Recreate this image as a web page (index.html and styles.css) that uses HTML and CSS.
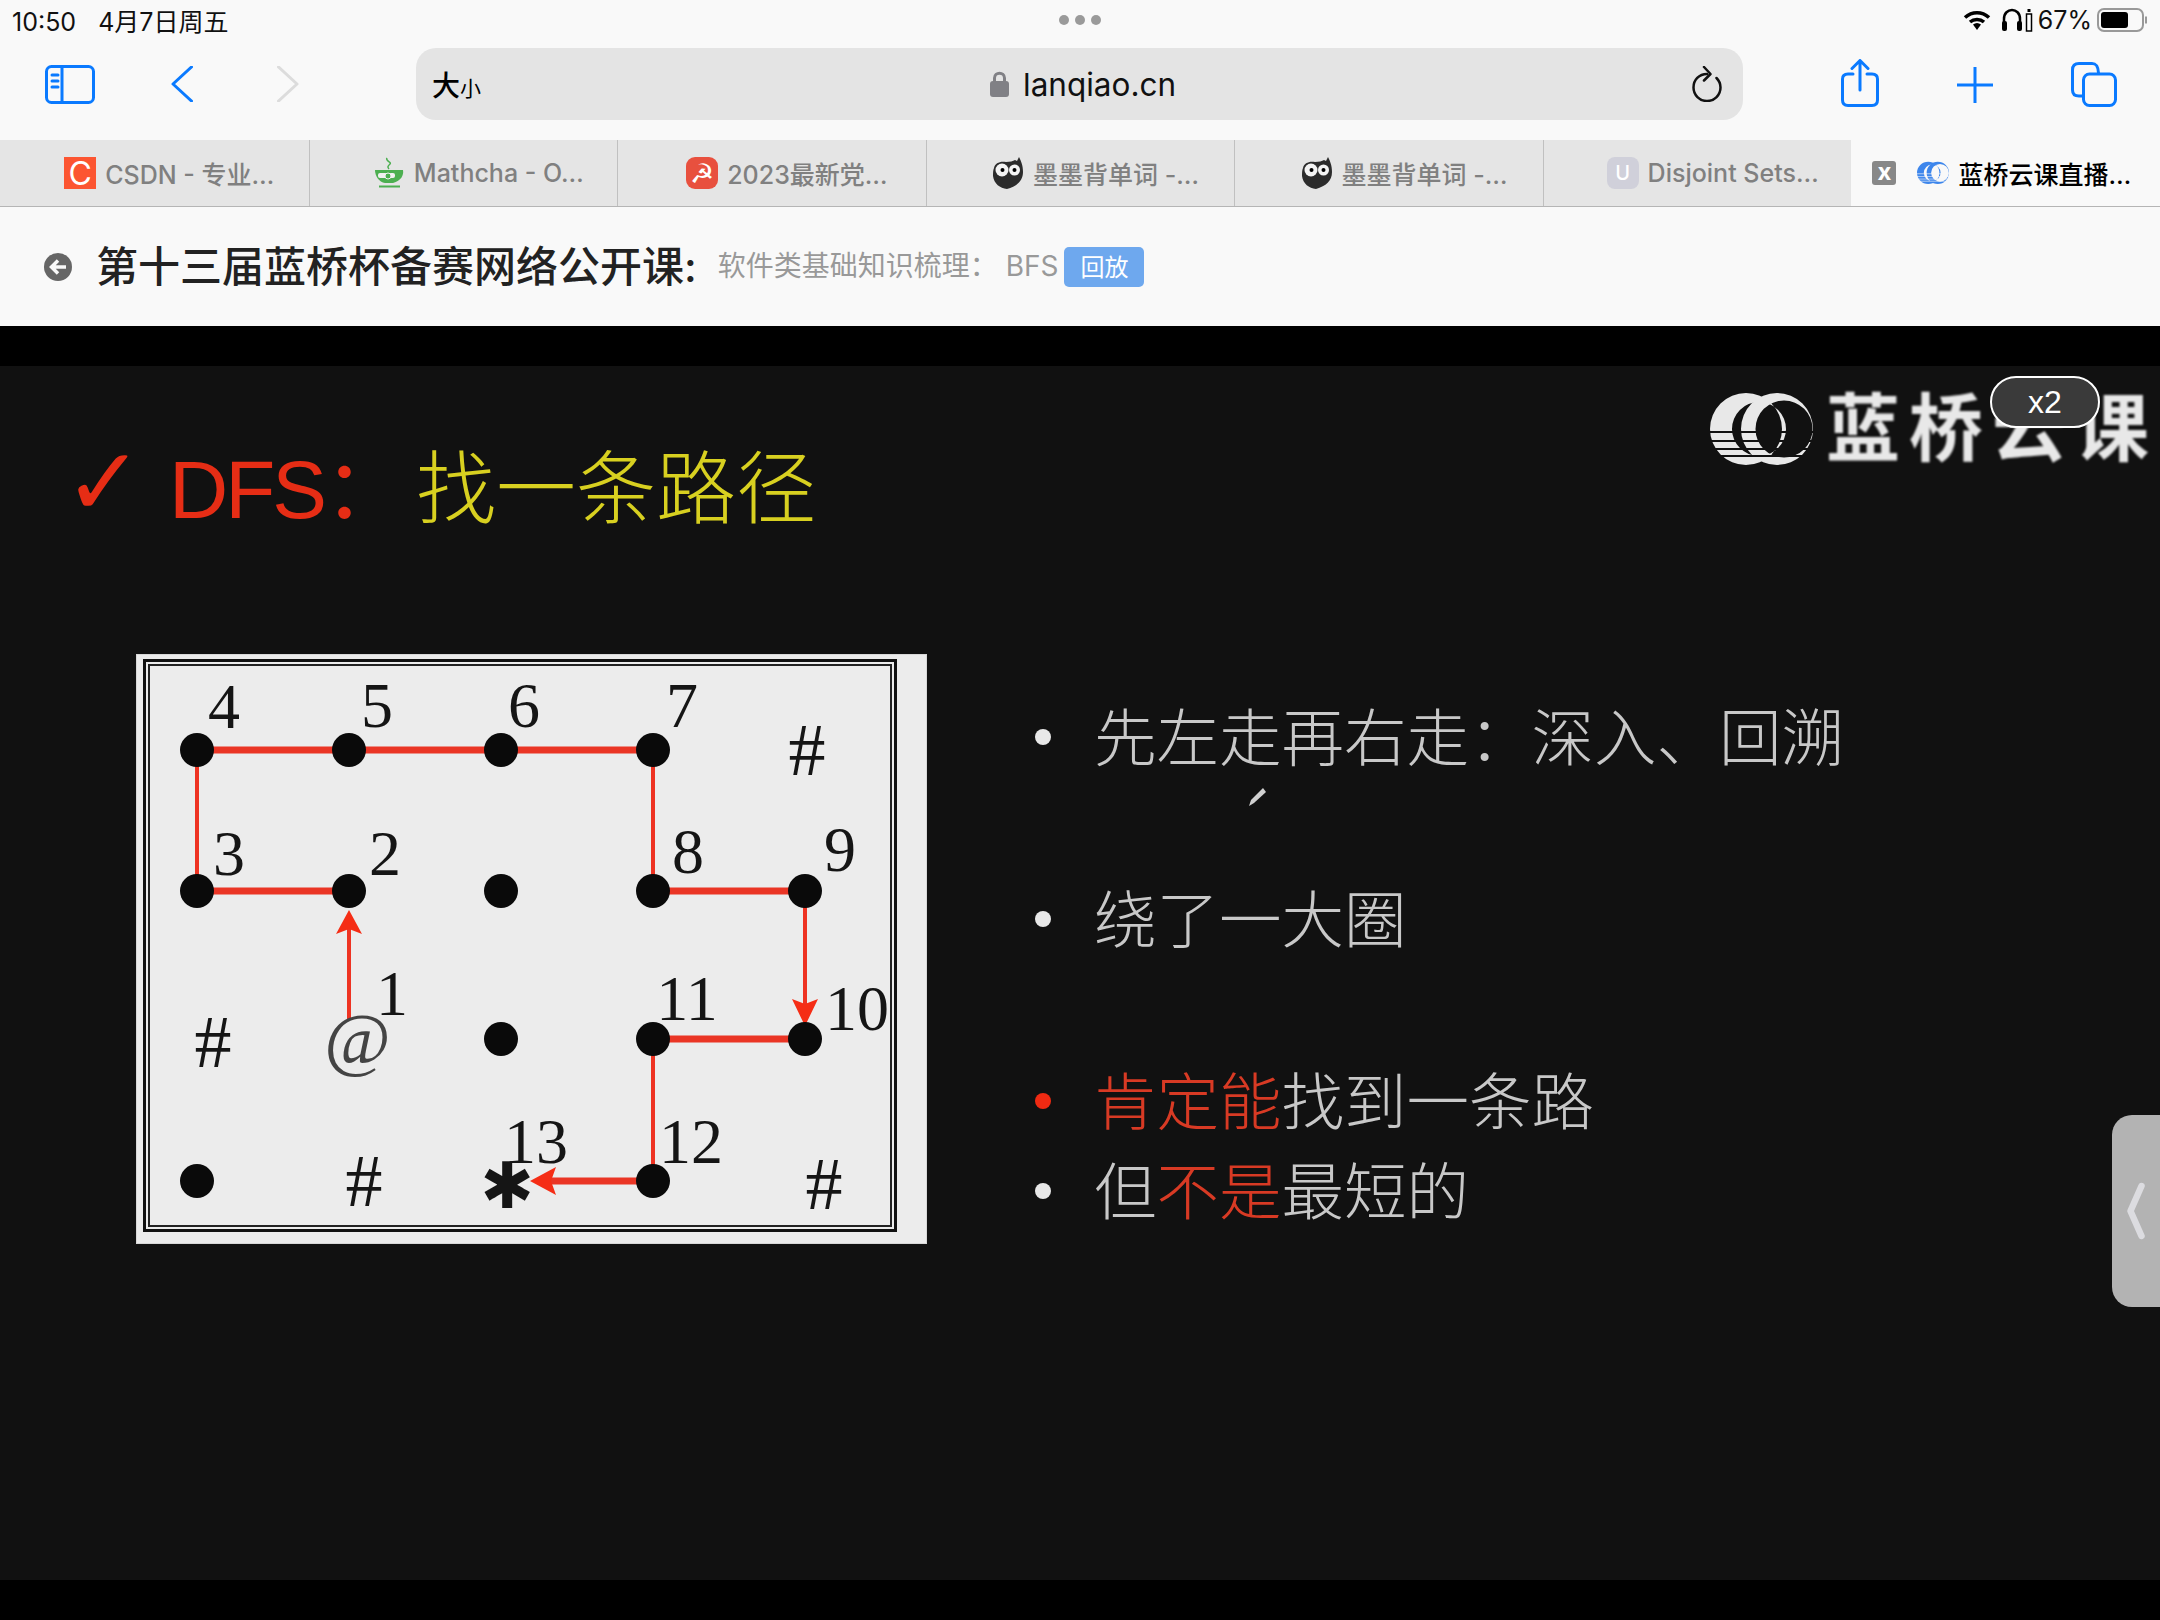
FILE: index.html
```html
<!doctype html>
<html lang = "zh-CN">
    <head>
        <meta charset = "utf-8" />
        <meta name = "viewport" content = "width=device-width, initial-scale=1.0">

        <!-- CSS -->
        <link rel="stylesheet" href="styles.css">

        <title>蓝桥云课直播</title>
    </head>
    <body>
        <!-- Tablet status bar -->
        <header class = "status">
            <div class = "status-left">
                <span>10:50</span>
                <span>4月7日周五</span>
            </div>
            <div class = "status-dots"><i></i><i></i><i></i></div>
            <div class = "status-right">
                <svg class = "wifi" viewBox = "0 0 28 22">
                    <path class = "wifi-arc" d = "M2 8.500C9 2 19 2 26 8.500" />
                    <path class = "wifi-arc" d = "M7 13C11 9.500 17 9.500 21 13" />
                    <path d = "M10 15.500C12.500 13.500 15.500 13.500 18 15.500L14 21Z" />
                </svg>
                <svg class = "phones" viewBox = "0 0 32 24">
                    <path class = "phones-arc" d = "M3 17V11C3 -1 19 -1 19 11V17" />
                    <rect x = "1" y = "13" width = "5" height = "10" rx = "2" />
                    <rect x = "16" y = "13" width = "5" height = "10" rx = "2" />
                    <rect x = "25.500" y = "6" width = "5" height = "17" class = "phones-level" />
                    <rect x = "26.500" y = "1" width = "3" height = "3" />
                </svg>
                <span>67%</span>
                <svg class = "battery" viewBox = "0 0 51 24">
                    <rect class = "battery-shell" x = "1" y = "1" width = "45" height = "22" rx = "6" />
                    <rect x = "4" y = "4" width = "27" height = "16" rx = "3" />
                    <path class = "battery-nub" d = "M49 8.500V15.500" />
                </svg>
            </div>
        </header>

        <!-- Browser toolbar -->
        <nav class = "toolbar">
            <svg class = "tool sidebar-icon" viewBox = "0 0 50 39">
                <rect x = "1.500" y = "1.500" width = "47" height = "36" rx = "5" />
                <path d = "M17 2V37M7 10H13M7 16H13M7 22H13" />
            </svg>
            <svg class = "tool back-icon" viewBox = "0 0 22 36">
                <path d = "M20.500 1L2 18L20.500 35" />
            </svg>
            <svg class = "tool forward-icon" viewBox = "0 0 22 36">
                <path d = "M1.500 1L20 18L1.500 35" />
            </svg>
            <div class = "address">
                <span class = "text-size"><b>大</b><small>小</small></span>
                <span class = "host">
                    <svg class = "lock" viewBox = "0 0 19 26">
                        <path class = "lock-loop" d = "M4.500 12V7C4.500 0.500 14.500 0.500 14.500 7V12" />
                        <rect y = "10" width = "19" height = "16" rx = "3" />
                    </svg>
                    lanqiao.cn
                </span>
                <svg class = "reload" viewBox = "0 0 30 36">
                    <path d = "M15 8C7 8 1.500 14 1.500 21.500C1.500 29 7.500 35 15 35C22.500 35 28.500 29 28.500 21.500C28.500 18 27 14.500 24.500 12" />
                    <path d = "M12 1L18.500 8L12 14.500" />
                </svg>
            </div>
            <svg class = "tool share-icon" viewBox = "0 0 38 48">
                <path d = "M12 15H7C3.500 15 1.500 17 1.500 20V41C1.500 44.500 3.500 46.500 7 46.500H31C34.500 46.500 36.500 44.500 36.500 41V20C36.500 17 34.500 15 31 15H26" />
                <path d = "M19 31V2M11 9.500L19 1.500L27 9.500" />
            </svg>
            <svg class = "tool plus-icon" viewBox = "0 0 36 36">
                <path d = "M18 0V36M0 18H36" />
            </svg>
            <svg class = "tool tabs-icon" viewBox = "0 0 46 45">
                <path d = "M11 34H8C3.500 34 1.500 32 1.500 28V8C1.500 3.500 3.500 1.500 8 1.500H21C25 1.500 27 3.500 27.500 11" />
                <rect x = "12.500" y = "12" width = "32" height = "31.500" rx = "6" />
            </svg>
        </nav>

        <!-- Open tabs -->
        <div class = "tabs">
            <div class = "tab">
                <span class = "favicon favicon-csdn">C</span>
                <span>CSDN - 专业…</span>
            </div>
            <div class = "tab">
                <svg class = "favicon" viewBox = "0 0 32 32">
                    <path class = "cup-steam" d = "M14 1C12 4 19 5 17 7C15 9 14 10 16 12" />
                    <path class = "cup-body" d = "M2 13H30C31 18 28 24 20 26H12C6 25 2 19 2 13Z" />
                    <rect class = "cup-band" x = "5" y = "16" width = "17" height = "5" rx = "2" />
                    <circle class = "cup-mark" cx = "15" cy = "19" r = "3" />
                    <path class = "cup-saucer" d = "M6 29.500H27" />
                </svg>
                <span>Mathcha - O…</span>
            </div>
            <div class = "tab">
                <span class = "favicon favicon-party">☭</span>
                <span>2023最新党…</span>
            </div>
            <div class = "tab">
                <svg class = "favicon" viewBox = "0 0 32 32"><use href = "#owl" /></svg>
                <span>墨墨背单词 -…</span>
            </div>
            <div class = "tab">
                <svg class = "favicon" viewBox = "0 0 32 32"><use href = "#owl" /></svg>
                <span>墨墨背单词 -…</span>
            </div>
            <div class = "tab">
                <span class = "favicon favicon-u">U</span>
                <span>Disjoint Sets…</span>
            </div>
            <div class = "tab tab-active">
                <span class = "tab-close">x</span>
                <svg class = "favicon rings-small" viewBox = "0 0 103 103"><use href = "#rings-large" y = "15" /></svg>
                <span>蓝桥云课直播…</span>
            </div>
        </div>

        <!-- Course header -->
        <div class = "course">
            <svg class = "course-back" viewBox = "0 0 28 28">
                <circle cx = "14" cy = "14" r = "14" />
                <path d = "M22 14H8M14 7.500L7.500 14L14 20.500" />
            </svg>
            <h1>第十三届蓝桥杯备赛网络公开课:</h1>
            <span class = "course-sub">软件类基础知识梳理&#65306; BFS</span>
            <span class = "badge">回放</span>
        </div>

        <!-- Video -->
        <main class = "video">
            <div class = "slide">
                <h2 class = "slide-title">
                    <span class = "slide-check">✓</span>
                    <span class = "slide-dfs">DFS&#65306;</span>
                    <span class = "slide-goal">找一条路径</span>
                </h2>
                <div class = "slide-body">
                    <svg class = "grid" viewBox = "136 654 791 590">
                        <rect class = "grid-frame" x = "144.500" y = "660.500" width = "751" height = "570" />
                        <rect class = "grid-frame-inner" x = "149" y = "665" width = "742" height = "561" />

                        <path class = "path-thick" d = "M197 750H653M197 891H349M653 891H805M653 1039H805M653 1181H550" />
                        <path class = "path-thin" d = "M197 750V891M653 750V891M349 1020V925M805 891V1005M653 1039V1181" />
                        <path class = "path-head" d = "M349 910L362 934L349 929L336 934Z" />
                        <path class = "path-head" d = "M805 1026L792 999L805 1004L818 999Z" />
                        <path class = "path-head" d = "M530 1181L556 1167L551 1181L556 1195Z" />

                        <circle class = "node" cx = "197" cy = "750" r = "17" />
                        <circle class = "node" cx = "349" cy = "750" r = "17" />
                        <circle class = "node" cx = "501" cy = "750" r = "17" />
                        <circle class = "node" cx = "653" cy = "750" r = "17" />
                        <circle class = "node" cx = "197" cy = "891" r = "17" />
                        <circle class = "node" cx = "349" cy = "891" r = "17" />
                        <circle class = "node" cx = "501" cy = "891" r = "17" />
                        <circle class = "node" cx = "653" cy = "891" r = "17" />
                        <circle class = "node" cx = "805" cy = "891" r = "17" />
                        <circle class = "node" cx = "501" cy = "1039" r = "17" />
                        <circle class = "node" cx = "653" cy = "1039" r = "17" />
                        <circle class = "node" cx = "805" cy = "1039" r = "17" />
                        <circle class = "node" cx = "197" cy = "1181" r = "17" />
                        <circle class = "node" cx = "653" cy = "1181" r = "17" />

                        <text class = "num" x = "224" y = "728">4</text>
                        <text class = "num" x = "377" y = "727">5</text>
                        <text class = "num" x = "524" y = "727">6</text>
                        <text class = "num" x = "682" y = "727">7</text>
                        <text class = "num" x = "229" y = "875">3</text>
                        <text class = "num" x = "385" y = "875">2</text>
                        <text class = "num" x = "688" y = "873">8</text>
                        <text class = "num" x = "840" y = "871">9</text>
                        <text class = "num" x = "392" y = "1015">1</text>
                        <text class = "num" x = "687" y = "1020">11</text>
                        <text class = "num" x = "857" y = "1030">10</text>
                        <text class = "num" x = "536" y = "1163">13</text>
                        <text class = "num" x = "691" y = "1163">12</text>

                        <text class = "wall" x = "807" y = "775">#</text>
                        <text class = "wall" x = "213" y = "1067">#</text>
                        <text class = "wall" x = "364" y = "1206">#</text>
                        <text class = "wall" x = "824" y = "1209">#</text>
                        <text class = "start" x = "357" y = "1063">@</text>
                        <text class = "goal" x = "507" y = "1208">✱</text>
                    </svg>
                    <ul class = "points">
                        <li class = "point point-first">先左走再右走&#65306;深入、回溯</li>
                        <li class = "point point-spaced">绕了一大圈</li>
                        <li class = "point point-spaced point-red"><span><em>肯定能</em>找到一条路</span></li>
                        <li class = "point"><span>但<em>不是</em>最短的</span></li>
                    </ul>
                </div>
                <svg class = "logo-rings" viewBox = "0 0 103 72"><use href = "#rings-large" /></svg>
                <span class = "logo-text">蓝桥云课</span>
                <svg class = "pen" viewBox = "0 0 20 20">
                    <path d = "M16 1L19 5L7 16L2 19L4 13Z" />
                </svg>
            </div>
            <span class = "speed">x2</span>
            <div class = "drawer">
                <svg viewBox = "0 0 18 58"><path d = "M14.500 4L3.500 29L14.500 54" /></svg>
            </div>
        </main>

        <!-- Shared icons -->
        <svg class = "defs" width = "0" height = "0">
            <defs>
                <g id = "owl">
                    <path class = "owl-body" d = "M2 11C3 6 8 4 14 5C18 5 21 4 23 3L25 4L27 0C29 4 31 8 31 15C31 24 25 29 15 32C8 31 2 27 1 19C1 16 1 13 2 11Z" />
                    <circle class = "owl-eye" cx = "10" cy = "13" r = "6.500" />
                    <circle class = "owl-eye" cx = "22.500" cy = "13" r = "5.500" />
                    <circle cx = "10.500" cy = "13" r = "2" />
                    <circle cx = "22.500" cy = "13" r = "2" />
                </g>
                <g id = "rings-large">
                    <path class = "ring-large" d = "M36 0A36 36 0 1 0 36 72A36 36 0 1 0 36 0ZM49 9A27 27 0 1 1 49 63A27 27 0 1 1 49 9Z" />
                    <path class = "ring-large" d = "M67 0A36 36 0 1 0 67 72A36 36 0 1 0 67 0ZM74 7.500A28.500 28.500 0 1 1 74 64.500A28.500 28.500 0 1 1 74 7.500Z" />
                    <path class = "ring-cuts" d = "M0 39H103M0 48H103M0 56H103M0 63H103" />
                </g>
            </defs>
        </svg>
    </body>
</html>
```

FILE: styles.css
```css
* {
    margin: 0px;
    padding: 0px;
    box-sizing: border-box;
    font-family: Inter, "Noto Sans CJK SC", sans-serif;
}
body {
    width: 2160px;
    height: 1620px;
    overflow: hidden;
    background-color: #000;
}
svg {
    display: block;
    flex-shrink: 0;
}
ul {
    list-style: none;
}
em {
    font-style: normal;
    color: #d83a24;
}

/* Status bar */
.status {
    height: 40px;
    display: grid;
    grid-template-columns: 1fr auto 1fr;
    align-items: center;
    padding: 0px 12px;
    font-size: 25px;
    color: #111;
    background-color: #f9f9f9;
}
.status-left {
    display: flex;
    align-items: baseline;
    gap: 22px;
}
.status-dots {
    display: flex;
    gap: 6px;
}
.status-dots i {
    width: 10px;
    height: 10px;
    border-radius: 50%;
    background-color: #9a9a9a;
}
.status-right {
    display: flex;
    align-items: center;
    justify-content: flex-end;
    gap: 5px;
}
.wifi {
    width: 28px;
    height: 22px;
    margin-right: 5px;
    fill: #000;
}
.wifi-arc {
    fill: none;
    stroke: #000;
    stroke-width: 3.500;
}
.phones {
    width: 32px;
    height: 24px;
    fill: #000;
}
.phones-arc {
    fill: none;
    stroke: #000;
    stroke-width: 2.500;
}
.phones-level {
    fill: #fff;
    stroke: #000;
    stroke-width: 1.500;
}
.battery {
    width: 51px;
    height: 24px;
}
.battery-shell {
    fill: none;
    stroke: #999;
    stroke-width: 2;
}
.battery-nub {
    stroke: #999;
    stroke-width: 2;
}

/* Toolbar */
.toolbar {
    height: 100px;
    display: flex;
    align-items: flex-start;
    padding-top: 8px;
    background-color: #f9f9f9;
}
.tool {
    fill: none;
    stroke: #0a7aff;
    stroke-width: 3;
    stroke-linecap: round;
    stroke-linejoin: round;
}
.sidebar-icon {
    width: 50px;
    height: 39px;
    margin: 17px 0px 0px 45px;
}
.back-icon {
    width: 22px;
    height: 36px;
    margin: 18px 0px 0px 76px;
}
.forward-icon {
    width: 22px;
    height: 36px;
    margin: 18px 0px 0px 84px;
    stroke: #dcdcdc;
}
.address {
    width: 1327px;
    height: 72px;
    display: flex;
    align-items: center;
    margin-left: 117px;
    padding: 0px 21px 0px 16px;
    border-radius: 20px;
    background-color: #e4e4e4;
}
.text-size {
    width: 558px;
    display: flex;
    align-items: baseline;
    color: #000;
}
.text-size b {
    font-size: 28px;
    font-weight: 500;
}
.text-size small {
    font-size: 21px;
}
.host {
    display: flex;
    align-items: center;
    gap: 14px;
    font-size: 31.500px;
    color: #111;
}
.lock {
    width: 19px;
    height: 26px;
    fill: #808085;
}
.lock-loop {
    fill: none;
    stroke: #808085;
    stroke-width: 3;
}
.reload {
    width: 30px;
    height: 36px;
    margin-left: auto;
    fill: none;
    stroke: #111;
    stroke-width: 2.500;
    stroke-linecap: round;
    stroke-linejoin: round;
}
.share-icon {
    width: 38px;
    height: 48px;
    margin: 11px 0px 0px 98px;
}
.plus-icon {
    width: 36px;
    height: 36px;
    margin: 19px 0px 0px 78px;
}
.tabs-icon {
    width: 46px;
    height: 45px;
    margin: 14px 0px 0px 78px;
}

/* Tabs */
.tabs {
    height: 67px;
    display: grid;
    grid-template-columns: repeat(7, 1fr);
    border-bottom: 1px solid #b5b5b5;
    background-color: #e5e5e5;
}
.tab {
    display: flex;
    align-items: center;
    justify-content: center;
    gap: 9px;
    padding-left: 30px;
    font-size: 25px;
    font-weight: 500;
    white-space: nowrap;
    color: #808080;
    border-left: 1px solid #c0c0c0;
}
.tab:first-child {
    border-left: none;
}
.tab-active {
    color: #000;
    border-left: none;
    background-color: #f9f9f9;
    justify-content: flex-start;
    padding-left: 21px;
}
.favicon {
    width: 32px;
    height: 32px;
    flex-shrink: 0;
    display: flex;
    align-items: center;
    justify-content: center;
    color: #fff;
}
.favicon-csdn {
    font-size: 32px;
    font-weight: 400;
    background-color: #fc5531;
}
.favicon-party {
    font-family: "DejaVu Sans", sans-serif;
    font-size: 27px;
    font-weight: 700;
    border-radius: 9px;
    background-color: #e8503e;
}
.favicon-u {
    font-size: 20px;
    border-radius: 8px;
    background-color: #d0d0da;
}
.tab-close {
    width: 24px;
    height: 24px;
    display: flex;
    align-items: center;
    justify-content: center;
    margin-right: 12px;
    padding-bottom: 3px;
    font-size: 24px;
    font-weight: 700;
    color: #fff;
    border-radius: 3px;
    background-color: #888;
}
.cup-steam {
    fill: none;
    stroke: #4caf50;
    stroke-width: 1.500;
}
.cup-body {
    fill: #4caf50;
}
.cup-band {
    fill: #f0f0f0;
}
.cup-mark {
    fill: #4caf50;
    stroke: #f0f0f0;
    stroke-width: 1;
}
.cup-saucer {
    stroke: #4caf50;
    stroke-width: 2;
}
.owl-body {
    fill: #2c2c2c;
}
.owl-eye {
    fill: #f4f4f4;
}
.rings-small {
    --ring: #3d86ec;
    --cut: #f9f9f9;
}

/* Course header */
.course {
    height: 119px;
    display: flex;
    align-items: center;
    padding-left: 44px;
    background-color: #f9f9f9;
}
.course-back {
    width: 28px;
    height: 28px;
    margin-right: 24px;
    fill: #666;
}
.course-back path {
    fill: none;
    stroke: #f9f9f9;
    stroke-width: 3.500;
}
.course h1 {
    margin-bottom: 7px;
    font-size: 42px;
    font-weight: 500;
    color: #222;
}
.course-sub {
    margin: 0px 0px 6px 21px;
    font-size: 28px;
    color: #999;
}
.badge {
    height: 40px;
    display: flex;
    align-items: center;
    margin-left: 6px;
    padding: 0px 16px 3px;
    font-size: 24px;
    color: #fff;
    border-radius: 5px;
    background-color: #6ea8ee;
}
.defs {
    position: absolute;
}

/* Video */
.video {
    height: 1214px;
    margin-top: 40px;
    position: relative;
    overflow: hidden;
    background-color: #111;
}
.slide {
    height: 100%;
    padding-top: 71px;
    filter: blur(0.6px);
}
.slide-title {
    height: 90px;
    display: flex;
    align-items: center;
    padding-left: 64px;
    font-weight: 400;
}
.slide-check {
    width: 105px;
    font-family: "DejaVu Sans", sans-serif;
    font-size: 95px;
    color: #e62d15;
}
.slide-dfs {
    width: 247px;
    font-family: "Liberation Sans", "Noto Sans CJK SC", sans-serif;
    font-size: 82px;
    letter-spacing: -3px;
    color: #e62d15;
}
.slide-goal {
    font-size: 80px;
    font-family: "Noto Sans CJK SC", sans-serif;
    font-weight: 300;
    color: #d8d020;
}
.slide-body {
    display: flex;
    align-items: flex-start;
    margin-top: 127px;
    padding-left: 136px;
}
.grid {
    width: 791px;
    height: 590px;
    background-color: #ececec;
    box-shadow: inset 0px 0px 0px 1px #d8d8d8;
}
.grid-frame {
    fill: none;
    stroke: #111;
    stroke-width: 3;
}
.grid-frame-inner {
    fill: none;
    stroke: #222;
    stroke-width: 2;
}
.path-thick {
    fill: none;
    stroke: #ea3525;
    stroke-width: 7;
}
.path-thin {
    fill: none;
    stroke: #ee3322;
    stroke-width: 4;
}
.path-head {
    fill: #f52d15;
}
.node {
    fill: #0a0a0a;
}
.num,
.wall,
.start {
    font-family: "Liberation Serif", serif;
    text-anchor: middle;
    fill: #151515;
}
.num {
    font-size: 64px;
}
.wall {
    font-size: 74px;
}
.start {
    font-size: 72px;
    font-style: italic;
    fill: #444;
}
.goal {
    font-family: "DejaVu Sans", sans-serif;
    font-size: 64px;
    text-anchor: middle;
    fill: #151515;
}
.points {
    margin: 38px 0px 0px 108px;
    font-family: "Noto Sans CJK SC", sans-serif;
}
.point {
    height: 90px;
    display: flex;
    align-items: center;
    padding: 0px 0px 8px 59px;
    position: relative;
    font-size: 62.500px;
    font-weight: 300;
    color: #c8c8c8;
}
.point::before {
    content: "";
    width: 16px;
    height: 16px;
    left: 0px;
    top: 37px;
    position: absolute;
    border-radius: 50%;
    background-color: #e8e8e8;
}
.point-spaced {
    margin-top: 92px;
}
.point-red::before {
    background-color: #f02a12;
}
.logo-rings {
    width: 103px;
    height: 72px;
    left: 1710px;
    top: 27px;
    position: absolute;
    filter: blur(0.6px);
}
.ring-large {
    fill: var(--ring, #e8e8e8);
    fill-rule: evenodd;
}
.ring-cuts {
    fill: none;
    stroke: var(--cut, #111);
    stroke-width: 2;
}
.logo-text {
    left: 1826px;
    top: 7px;
    position: absolute;
    font-family: "Noto Sans CJK SC", sans-serif;
    font-size: 74px;
    font-weight: 700;
    line-height: 100px;
    letter-spacing: 9px;
    white-space: nowrap;
    color: #e8e8e8;
    filter: blur(0.8px);
}
.pen {
    width: 20px;
    height: 20px;
    left: 1247px;
    top: 421px;
    position: absolute;
    fill: #d0d0d0;
}
.speed {
    width: 110px;
    height: 52px;
    left: 1990px;
    top: 10px;
    position: absolute;
    display: flex;
    align-items: center;
    justify-content: center;
    font-family: "Liberation Sans", sans-serif;
    font-size: 32px;
    color: #fff;
    border: 2px solid #fff;
    border-radius: 26px;
    background-color: #3a3a3a;
}
.drawer {
    width: 48px;
    height: 192px;
    left: 2112px;
    top: 749px;
    position: absolute;
    display: flex;
    align-items: center;
    padding-left: 15px;
    border-radius: 20px 0px 0px 20px;
    background-color: #b3b3b3;
}
.drawer svg {
    width: 18px;
    height: 58px;
    fill: none;
    stroke: #dcdce0;
    stroke-width: 6.500;
    stroke-linecap: round;
    stroke-linejoin: round;
}
```
